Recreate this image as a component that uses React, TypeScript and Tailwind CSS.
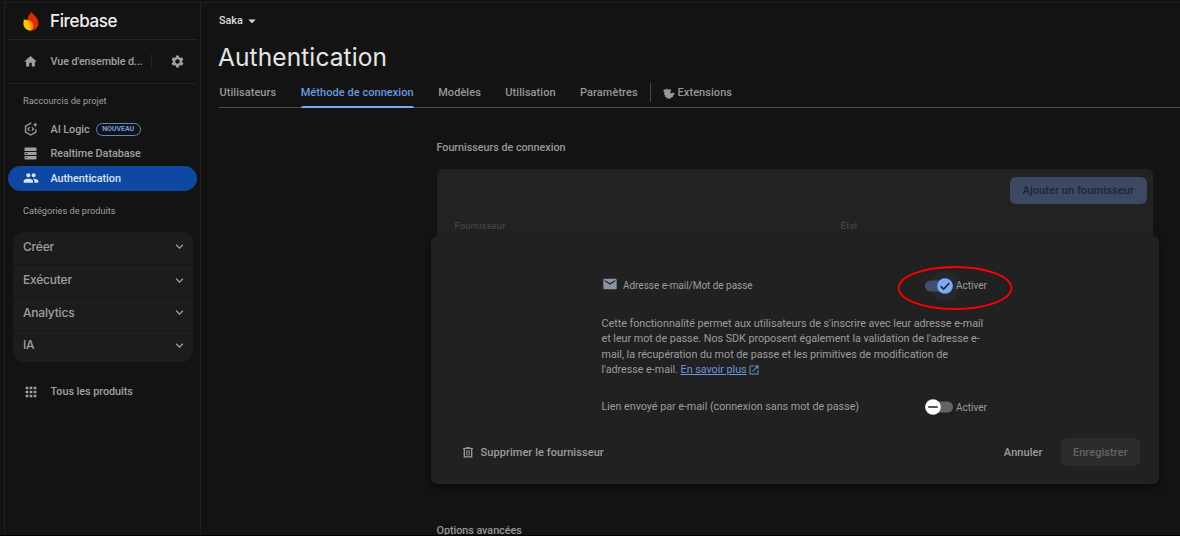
import React from "react";
import {
  MdHome,
  MdSettings,
  MdPeople,
  MdApps,
  MdEmail,
  MdOpenInNew,
  MdExpandMore,
  MdArrowDropDown,
} from "react-icons/md";

const display = "font-[Inter,'Liberation_Sans',sans-serif]";

function FirebaseLogo() {
  return (
    <svg viewBox="0 0 16 19" className="block h-[19px] w-4">
      <path d="M8.4.3C10 2.2 15.6 6.3 15.6 11.3A7.4 7.4 0 0 1 8 18.6C5.5 18.6 4 17 4 15L4.6 8C5 4.6 6.4 2 8.4.3Z" fill="#dd2c00" />
      <path d="M3.6 7.4C6.5 7.8 10.2 10 10.2 13.5C10.2 16 9.4 18 7.8 18.6C5 18.5 3.2 17.5 2.4 16.3Z" fill="#ff9100" />
      <path d="M.9 7.5C4.2 7.1 7.6 10.5 7.4 18.5C3.6 18.5.4 15.6.4 11.8C.4 10.2.5 8.8.9 7.5Z" fill="#ffc400" />
    </svg>
  );
}

function AiLogicIcon() {
  return (
    <svg viewBox="0 0 14 14" className="block h-3.5 w-3.5" fill="none" stroke="currentColor" strokeWidth="1.3">
      <path d="M7.4 1.5 6.7 1.2 1.5 4.2V10L6.7 13 11.9 10V7.2" />
      <path d="M5.6 5.2 3.9 7 5.6 8.8M7.8 5.2 9.5 7 7.8 8.8" strokeWidth="1.2" />
      <path d="M11.2.2 11.9 2.1 13.8 2.8 11.9 3.5 11.2 5.4 10.5 3.5 8.6 2.8 10.5 2.1Z" fill="currentColor" stroke="none" />
    </svg>
  );
}

function DatabaseIcon() {
  return (
    <svg viewBox="0 0 13 13" className="block h-[13px] w-[13px]" fill="currentColor">
      <path d="M1.5.5h10a1 1 0 0 1 1 1V4H.5V1.5a1 1 0 0 1 1-1Z" />
      <path fillRule="evenodd" d="M.5 5h12v3H.5ZM1.8 6.1v.9h1.6v-.9Z" />
      <path fillRule="evenodd" d="M.5 9h12v2.5a1 1 0 0 1-1 1h-10a1 1 0 0 1-1-1ZM1.8 10.2v.9h1.6v-.9Z" />
    </svg>
  );
}

function ExtensionsIcon() {
  return (
    <svg viewBox="0 0 12 12" className="block h-3 w-3" fill="currentColor">
      <path d="M.9 1.3 2.6 1.7 3.8.6 5.2 1.8 7 .9 8.2 2.4 7.2 4.2C7.4 5.4 8.4 5.6 9.4 4.7L11.6 5 11.1 6.7 10 7.6 10 9 8.4 9.3 7.2 11.1 5.7 10.2 4 10.7 3.5 9.2 1.9 8.7 2.2 7.2.7 6 1.7 4.7.4 3.2Z" />
    </svg>
  );
}

function TrashIcon() {
  return (
    <svg viewBox="0 0 10 11" className="block h-[11px] w-2.5" fill="none" stroke="currentColor">
      <path d="M0 1.4H10M3.2.6H6.8" strokeWidth="1" />
      <path d="M1.3 1.5V9.9H8.7V1.5" strokeWidth="1.3" />
      <path d="M3.9 3V8.5M6.1 3V8.5" strokeWidth="1" />
    </svg>
  );
}

function Switch({ on }: { on: boolean }) {
  return (
    <svg viewBox="0 0 30 18" className="block h-[18px] w-[30px] shrink-0 overflow-visible">
      {on && <circle cx="21" cy="9" r="15" fill="#7cacf8" fillOpacity="0.05" />}
      <rect x="1" y="3.5" width="28" height="11" rx="5.5" fill={on ? "#3f506e" : "#646464"} />
      <circle cx={on ? 21 : 9} cy="9" r="7.8" fill={on ? "#7cacf8" : "#ffffff"} />
      <path
        d={on ? "M16.6 9.2 19.6 12.1 25.4 5.9" : "M4.2 9H13.8"}
        fill="none"
        stroke="#1f1f1f"
        strokeWidth="1.5"
      />
    </svg>
  );
}

function NavItem({
  icon,
  label,
  className,
  children,
}: {
  icon: React.ReactNode;
  label: string;
  className: string;
  children?: React.ReactNode;
}) {
  return (
    <div className={`mx-[3px] flex h-[24.5px] items-center rounded-full pl-[14px] text-[10.8px] font-medium tracking-[-0.03px] ${className}`}>
      <span className="flex w-[17px] justify-center">{icon}</span>
      <span className="ml-[11.5px] pt-px">{label}</span>
      {children}
    </div>
  );
}

const categories = ["Créer", "Exécuter", "Analytics", "IA"];

function Sidebar() {
  return (
    <aside className="flex w-[197px] shrink-0 flex-col border-x border-[#202020] text-[#a0a0a0]">
      <div className="mx-[3px] flex h-[37px] items-center border-b border-[#242424] pl-[15px]">
        <FirebaseLogo />
        <span className={`ml-[11px] pt-[2px] text-[17px] font-medium tracking-[-0.35px] text-[#f1f1f1] ${display}`}>Firebase</span>
      </div>
      <div className="mx-[3px] flex h-11 items-center border-b border-[#202020] pl-[15px] text-[10.8px] font-medium">
        <MdHome className="h-[15px] w-[15px]" />
        <span className="ml-[12.5px] w-[100px] pt-[1.5px] tracking-[-0.08px]">Vue d'ensemble d...</span>
        <span className="h-[15px] w-px bg-[#222222]" />
        <MdSettings className="ml-[18px] h-[15px] w-[15px]" />
      </div>
      <div className="flex h-[33px] items-center pl-[18px] text-[9.2px]">Raccourcis de projet</div>
      <nav className="flex flex-col">
        <NavItem icon={<AiLogicIcon />} label="AI Logic" className="">
          <span className="ml-[6px] flex h-[13px] w-[45px] items-center justify-center rounded-full border border-[#5f86c6] text-[7px] font-bold text-[#6f9be2]">
            NOUVEAU
          </span>
        </NavItem>
        <NavItem icon={<DatabaseIcon />} label="Realtime Database" className="" />
        <NavItem icon={<MdPeople className="h-4 w-4" />} label="Authentication" className="bg-[#0f48a3] text-[#d9e4fb]" />
      </nav>
      <div className="flex h-[41px] items-center pl-[18px] text-[9.2px]">Catégories de produits</div>
      <div className={`mr-[7.5px] ml-[7.5px] overflow-hidden rounded-[11px] bg-[#1c1c1c] text-[12px] font-medium tracking-[-0.2px] ${display}`}>
        {categories.map((name, i) => (
          <div
            key={name}
            className={`flex h-[32.7px] items-center justify-between pr-[6px] pb-[2px] pl-[10.5px] ${i ? "border-t border-[#161616]" : ""}`}
          >
            <span>{name}</span>
            <MdExpandMore className="h-[15px] w-[15px]" />
          </div>
        ))}
      </div>
      <div className="mt-[17px]">
        <NavItem icon={<MdApps className="h-4 w-4" />} label="Tous les produits" className="" />
      </div>
    </aside>
  );
}

const tab = "flex h-full items-center";

function Tabs() {
  return (
    <div className="ml-[17px] flex h-[29px] items-start border-b border-[#4a4b4d] pl-[0.5px] text-[11px] font-medium tracking-[0.05px] text-[#979797]">
      <div className="flex h-[29px] items-center gap-[24.5px]">
        <span className={tab}>Utilisateurs</span>
        <span className="relative flex h-full items-center text-[#6b99e0]">
          Méthode de connexion
          <span className="absolute inset-x-0 bottom-0 h-[2.5px] rounded-t bg-[#7cacf8]" />
        </span>
        <span className={tab}>Modèles</span>
        <span className={tab}>Utilisation</span>
        <span className={tab}>Paramètres</span>
      </div>
      <span className="mt-[4px] ml-[12.5px] h-[19px] w-px bg-[#444746]" />
      <span className="ml-[11.5px] flex h-[29px] items-center gap-[3px]">
        <ExtensionsIcon />
        Extensions
      </span>
    </div>
  );
}

function ProviderPanel() {
  return (
    <section className="relative ml-[229px] flex h-[248px] w-[727.5px] shrink-0 flex-col rounded-md bg-[#212121] text-[10.8px] text-[#9c9c9c] shadow-[0_3px_8px_rgba(0,0,0,0.5)]">
      <div className="mt-[41px] ml-[170.5px] flex h-[18px] w-[400px] items-center">
        <MdEmail className="mb-1 h-4 w-4 text-[#8b94a3]" />
        <span className="ml-[5.5px] w-[301px] pb-px text-[10px] tracking-[-0.03px]">Adresse e-mail/Mot de passe</span>
        <Switch on />
        <span className="ml-[2px] pb-px text-[10px]">Activer</span>
      </div>
      <svg viewBox="0 0 116 46" className="absolute top-[29px] left-[466px] h-[46px] w-[116px]" fill="none">
        <ellipse cx="58" cy="23" rx="56.3" ry="21" stroke="#ff0000" strokeWidth="1.8" />
      </svg>
      <p className="mt-[21px] ml-[170.5px] leading-[15.4px] tracking-[-0.045px] whitespace-nowrap">
        Cette fonctionnalité permet aux utilisateurs de s'inscrire avec leur adresse e-mail
        <br />
        et leur mot de passe. Nos SDK proposent également la validation de l'adresse e-
        <br />
        mail, la récupération du mot de passe et les primitives de modification de
        <br />
        l'adresse e-mail.{" "}
        <span className="text-[#6b96dc] underline">En savoir plus</span>
        <MdOpenInNew className="ml-[1px] inline-block h-3 w-3 align-[-2.5px] text-[#6b96dc]" />
      </p>
      <div className="mt-[20.5px] ml-[170.5px] flex h-[18px] items-center">
        <span className="w-[322.5px] tracking-[-0.045px]">Lien envoyé par e-mail (connexion sans mot de passe)</span>
        <Switch on={false} />
        <span className="ml-[2px] text-[10px]">Activer</span>
      </div>
      <div className="mt-[22px] flex h-7 items-center pr-[18.5px] pl-[31.5px] text-[11px] font-medium tracking-[0.07px]">
        <TrashIcon />
        <span className="ml-2 flex-1 pt-[2px]">Supprimer le fournisseur</span>
        <span className="mr-[18px] pt-[2px]">Annuler</span>
        <span className="flex h-7 w-[79.5px] items-center justify-center rounded-md bg-[#2c2c2c] pt-[2px] text-[#646464]">Enregistrer</span>
      </div>
    </section>
  );
}

export default function App() {
  return (
    <div className="h-[536px] w-[1180px] overflow-hidden border-b border-black bg-[#131313] pt-[2px] pl-1 font-[Roboto,'Liberation_Sans',sans-serif]">
      <div className="flex h-[533px] border-t border-[#202020]">
        <Sidebar />
        <main className="flex min-w-0 flex-1 flex-col pl-px">
          <div className="flex h-9 shrink-0 items-center pl-[17px] text-[10.8px] font-medium text-[#dcdcdc]">
            Saka
            <MdArrowDropDown className="h-[18px] w-[18px]" />
          </div>
          <h1 className={`flex h-[36px] shrink-0 items-center pl-4 text-[24.5px] tracking-[0.1px] text-[#e6e6e6] ${display}`}>
            Authentication
          </h1>
          <div className="shrink-0 pt-1">
            <Tabs />
          </div>
          <h2 className="mt-[28px] ml-[234.5px] flex h-6 shrink-0 items-center text-[10.8px] font-medium tracking-[-0.04px] text-[#989898]">
            Fournisseurs de connexion
          </h2>
          <div className="mt-[9px] ml-[235px] flex h-[67px] w-[715.5px] shrink-0 flex-col rounded-t-md bg-[#222222]">
            <div className="mt-[7.5px] mr-[6px] flex h-[27.5px] w-[136.5px] shrink-0 items-center justify-center self-end rounded-md bg-[#3c4961] pt-px text-[11px] font-medium tracking-[0.07px] text-[#1b2538]">
              Ajouter un fournisseur
            </div>
            <div className="mt-[11.5px] flex h-5 items-center pl-[17.5px] text-[9.3px] font-medium tracking-[0.15px] text-[#434343]">
              <span className="w-[386px]">Fournisseur</span>
              <span>État</span>
            </div>
          </div>
          <ProviderPanel />
          <h2 className="mt-[35px] ml-[234.5px] flex h-6 shrink-0 items-center text-[10.8px] font-medium tracking-[-0.04px] text-[#989898]">
            Options avancées
          </h2>
        </main>
      </div>
    </div>
  );
}
